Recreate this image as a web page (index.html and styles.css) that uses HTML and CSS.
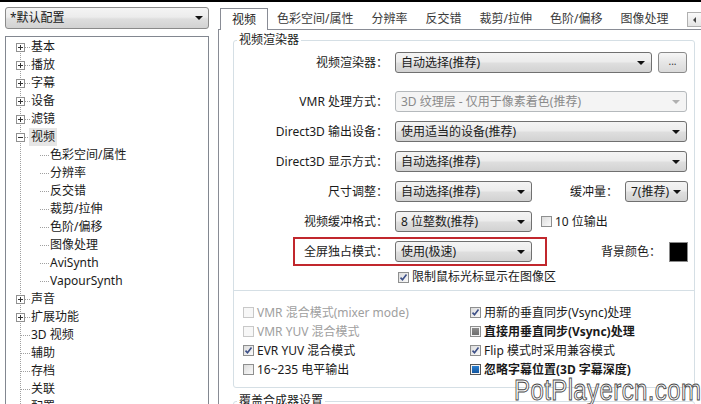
FILE: index.html
```html
<!DOCTYPE html>
<html lang="zh-CN">
<head>
  <meta charset="UTF-8" />
  <title>视频设置</title>
  <link rel="stylesheet" href="styles.css">
</head>
<body>
  <div class="frame">
    <!-- 左侧：配置 + 树 -->
    <div class="side">
      <div class="combo preset"><span>*默认配置</span></div>
      <div class="tree">
        <div class="node"><i class="box plus"></i><i class="dash"></i><span>基本</span></div>
        <div class="node"><i class="box plus"></i><i class="dash"></i><span>播放</span></div>
        <div class="node"><i class="box plus"></i><i class="dash"></i><span>字幕</span></div>
        <div class="node"><i class="box plus"></i><i class="dash"></i><span>设备</span></div>
        <div class="node"><i class="box plus"></i><i class="dash"></i><span>滤镜</span></div>
        <div class="node"><i class="box minus"></i><i class="dash"></i><span class="sel">视频</span></div>
        <div class="node child"><i class="dash"></i><span>色彩空间/属性</span></div>
        <div class="node child"><i class="dash"></i><span>分辨率</span></div>
        <div class="node child"><i class="dash"></i><span>反交错</span></div>
        <div class="node child"><i class="dash"></i><span>裁剪/拉伸</span></div>
        <div class="node child"><i class="dash"></i><span>色阶/偏移</span></div>
        <div class="node child"><i class="dash"></i><span>图像处理</span></div>
        <div class="node child"><i class="dash"></i><span>AviSynth</span></div>
        <div class="node child"><i class="dash"></i><span>VapourSynth</span></div>
        <div class="node"><i class="box plus"></i><i class="dash"></i><span>声音</span></div>
        <div class="node"><i class="box plus"></i><i class="dash"></i><span>扩展功能</span></div>
        <div class="node leaf"><i class="dash"></i><span>3D 视频</span></div>
        <div class="node leaf"><i class="dash"></i><span>辅助</span></div>
        <div class="node leaf"><i class="dash"></i><span>存档</span></div>
        <div class="node leaf"><i class="dash"></i><span>关联</span></div>
        <div class="node leaf"><i class="dash"></i><span>配置</span></div>
      </div>
    </div>

    <!-- 右侧：选项卡 -->
    <div class="main">
      <div class="tabs">
        <div class="tab on">视频</div>
        <div class="tab">色彩空间/属性</div>
        <div class="tab">分辨率</div>
        <div class="tab">反交错</div>
        <div class="tab">裁剪/拉伸</div>
        <div class="tab">色阶/偏移</div>
        <div class="tab">图像处理</div>
        <div class="tab-scroll"><i></i></div>
      </div>

      <div class="page">
        <fieldset class="group">
          <legend>视频渲染器</legend>

          <div class="row first">
            <div class="label">视频渲染器：</div>
            <div class="combo w-wide"><span>自动选择(推荐)</span></div>
            <div class="btn">...</div>
          </div>
          <div class="row">
            <div class="label">VMR 处理方式：</div>
            <div class="combo off w-full"><span>3D 纹理层 - 仅用于像素着色(推荐)</span></div>
          </div>
          <div class="row">
            <div class="label">Direct3D 输出设备：</div>
            <div class="combo w-full"><span>使用适当的设备(推荐)</span></div>
          </div>
          <div class="row">
            <div class="label">Direct3D 显示方式：</div>
            <div class="combo w-full"><span>自动选择(推荐)</span></div>
          </div>
          <div class="row">
            <div class="label">尺寸调整：</div>
            <div class="combo w-mid"><span>自动选择(推荐)</span></div>
            <div class="label-r">缓冲量：</div>
            <div class="combo w-small"><span>7(推荐)</span></div>
          </div>
          <div class="row">
            <div class="label">视频缓冲格式：</div>
            <div class="combo w-mid"><span>8 位整数(推荐)</span></div>
            <label class="check after-combo"><span class="cb"></span>10 位输出</label>
          </div>
          <div class="row marked">
            <div class="label">全屏独占模式：</div>
            <div class="combo w-mid"><span>使用(极速)</span></div>
            <div class="label-r">背景颜色：</div>
            <div class="swatch"></div>
            <div class="mark"></div>
          </div>
          <div class="row sub">
            <label class="check"><span class="cb"><svg viewBox="0 0 9 9"><path d="M1.5 4.6l2 2.2 4-5.2"/></svg></span>限制鼠标光标显示在图像区</label>
          </div>

          <div class="checks">
            <label class="check dis"><span class="cb"></span>VMR 混合模式(mixer mode)</label>
            <label class="check"><span class="cb"><svg viewBox="0 0 9 9"><path d="M1.5 4.6l2 2.2 4-5.2"/></svg></span>用新的垂直同步(Vsync)处理</label>
            <label class="check dis"><span class="cb"></span>VMR YUV 混合模式</label>
            <label class="check bold"><span class="cb mix"></span>直接用垂直同步(Vsync)处理</label>
            <label class="check"><span class="cb"><svg viewBox="0 0 9 9"><path d="M1.5 4.6l2 2.2 4-5.2"/></svg></span>EVR YUV 混合模式</label>
            <label class="check"><span class="cb"><svg viewBox="0 0 9 9"><path d="M1.5 4.6l2 2.2 4-5.2"/></svg></span>Flip 模式时采用兼容模式</label>
            <label class="check"><span class="cb"></span>16~235 电平输出</label>
            <label class="check bold"><span class="cb mix blue"></span>忽略字幕位置(3D 字幕深度)</label>
          </div>
        </fieldset>

        <fieldset class="group next">
          <legend>覆盖合成器设置</legend>
        </fieldset>
      </div>
    </div>

    <div class="watermark">PotPlayercn.com</div>
  </div>
</body>
</html>
```

FILE: styles.css
```css
* {
  box-sizing: border-box;
  margin: 0;
  padding: 0;
}
body {
  font-family: "Noto Sans", "Noto Sans CJK SC", sans-serif;
  font-size: 12px;
  line-height: 16px;
  color: #1a1a1a;
  background: #fff;
  width: 701px;
  height: 404px;
  overflow: hidden;
}
/* 整体窗口 */
.frame {
  position: relative;
  display: flex;
  height: 404px;
  overflow: hidden;
  border-top: 2px solid #000;
}
/* 左侧 */
.side {
  width: 209px;
  padding: 5px 0 0 5px;
  flex-shrink: 0;
}
/* 下拉框通用 */
.combo {
  display: flex;
  align-items: center;
  height: 21px;
  border: 1px solid #707070;
  border-radius: 3px;
  background: linear-gradient(#f4f4f4, #ececec 45%, #dedede 55%, #d2d2d2);
  padding: 0 6px 0 5px;
  white-space: nowrap;
  flex-shrink: 0;
}
.combo::after {
  content: '';
  margin-left: auto;
  border-left: 4px solid transparent;
  border-right: 4px solid transparent;
  border-top: 4px solid #111;
}
.combo.off {
  background: #f4f4f4;
  border-color: #b5b9bc;
  color: #8a8a8a;
}
.combo.off::after {
  border-top-color: #b0b0b0;
}
.preset {
  width: 204px;
  height: 22px;
  padding-left: 4px;
  padding-right: 5px;
  border-color: #8a8a8a;
}
/* 树 */
.tree {
  margin-top: 7px;
  width: 204px;
  height: 380px;
  border: 1px solid #828790;
  padding-top: 1px;
  background: repeating-linear-gradient(#a0a0a0 0 1px, transparent 1px 2px) 14px 10px / 1px 100% no-repeat;
}
.node {
  display: flex;
  align-items: center;
  height: 18px;
  white-space: nowrap;
}
.box {
  width: 9px;
  height: 9px;
  margin-left: 10px;
  border: 1px solid #919191;
  flex-shrink: 0;
}
.box.plus {
  background:
    linear-gradient(#333, #333) center / 5px 1px no-repeat,
    linear-gradient(#333, #333) center / 1px 5px no-repeat,
    #fff;
}
.box.minus {
  background: linear-gradient(#333, #333) center / 5px 1px no-repeat, #fff;
}
.dash {
  width: 5px;
  height: 1px;
  margin-right: 1px;
  background: repeating-linear-gradient(to right, #a0a0a0 0 1px, transparent 1px 2px);
}
.leaf .dash {
  margin-left: 15px;
  width: 9px;
}
.child .dash {
  margin-left: 34px;
  width: 9px;
}
.sel {
  background: #e6e6e6;
  padding: 1px 2px;
  margin-left: -2px;
}
/* 右侧 */
.main {
  margin-left: 9px;
  flex: 1;
  padding-top: 6px;
  min-width: 0;
}
.tabs {
  display: flex;
  align-items: flex-end;
  height: 21px;
  padding-left: 2px;
  white-space: nowrap;
}
.tab {
  padding: 0 9px;
  line-height: 20px;
  color: #3a3a3a;
}
.tab.on {
  padding: 1px 11px 0;
  height: 22px;
  margin-bottom: -1px;
  border: 1px solid #898c95;
  border-bottom: none;
  background: #fff;
  color: #1a1a1a;
  position: relative;
  z-index: 1;
}
.tab-scroll {
  margin-left: auto;
  margin-bottom: 2px;
  width: 14px;
  height: 15px;
  border: 1px solid #b0b0b0;
  border-right: none;
  background: linear-gradient(#fafafa, #e4e4e4);
  display: flex;
  align-items: center;
  justify-content: center;
}
.tab-scroll i {
  border-top: 3px solid transparent;
  border-bottom: 3px solid transparent;
  border-right: 3px solid #444;
}
.page {
  border-top: 1px solid #898c95;
  border-left: 1px solid #898c95;
  padding: 2px 0 0 14px;
  height: 400px;
}
/* 分组框 */
.group {
  width: 462px;
  border: 1px solid #d5dfe5;
  border-radius: 3px;
  padding: 4px 0 8px;
  min-inline-size: 0;
}
.group legend {
  margin-left: 3px;
  padding: 0 2px;
  line-height: 16px;
}
.group.next {
  margin-top: 5px;
  height: 40px;
}
/* 表单行 */
.row {
  display: flex;
  align-items: center;
  height: 21px;
  margin-bottom: 9px;
  padding-right: 6px;
  white-space: nowrap;
}
.row.first {
  margin-bottom: 18px;
}
.label {
  width: 154px;
  text-align: right;
  margin-right: 7px;
  flex-shrink: 0;
}
.label-r {
  margin-left: auto;
  margin-right: 7px;
}
.marked .label-r {
  margin-right: 8px;
}
.w-full { width: 292px; }
.w-wide { width: 257px; }
.w-mid { width: 137px; }
.w-small { width: 63px; }
.btn {
  width: 29px;
  height: 21px;
  margin-left: 6px;
  border: 1px solid #8a8a8a;
  border-radius: 3px;
  background: linear-gradient(#f6f6f6, #e6e6e6 50%, #dadada);
  font-size: 10px;
  line-height: 16px;
  color: #333;
  text-align: center;
}
.swatch {
  width: 19px;
  height: 20px;
  border: 1px solid #8a8a8a;
  background: #000;
}
/* 红框标注 */
.marked {
  position: relative;
}
.mark {
  position: absolute;
  left: 59px;
  top: -4px;
  width: 254px;
  height: 29px;
  border: 2px solid #c1272d;
}
.row.sub {
  height: 12px;
  padding-left: 164px;
  margin-bottom: 7px;
}
/* 复选框 */
.check {
  display: flex;
  align-items: center;
  white-space: nowrap;
}
.cb {
  width: 11px;
  height: 11px;
  margin-right: 3px;
  border: 1px solid #8e8f8f;
  background: linear-gradient(135deg, #dcdcdc, #fafafa);
  display: flex;
  align-items: center;
  justify-content: center;
  flex-shrink: 0;
}
.cb svg {
  width: 9px;
  height: 9px;
}
.cb path {
  fill: none;
  stroke: #3c4f87;
  stroke-width: 1.6;
}
.cb.mix {
  background: linear-gradient(#8c8c8c, #6e6e6e) center / 7px 7px no-repeat, #f4f4f4;
}
.cb.mix.blue {
  border-color: #555;
  background: linear-gradient(#2a7fd0, #13559e) center / 7px 7px no-repeat, #f4f4f4;
}
.check.dis {
  color: #a0a0a0;
}
.check.dis .cb {
  border-color: #c8c8c8;
  background: #f7f7f7;
}
.check.bold {
  font-weight: bold;
}
.after-combo {
  margin-left: 9px;
}
.checks {
  border-top: 1px solid #d5dfe5;
  padding: 12px 0 0 9px;
  display: grid;
  grid-template-columns: 227px 1fr;
  grid-auto-rows: 19px;
}
/* 水印 */
.watermark {
  position: absolute;
  left: 514px;
  top: 374px;
  font-family: "Liberation Sans", sans-serif;
  font-size: 24px;
  line-height: 24px;
  letter-spacing: 0.4px;
  color: #fff;
  -webkit-text-stroke: 0.8px #4a4a4a;
  transform: scaleY(1.2);
  transform-origin: top left;
  white-space: nowrap;
}
```
